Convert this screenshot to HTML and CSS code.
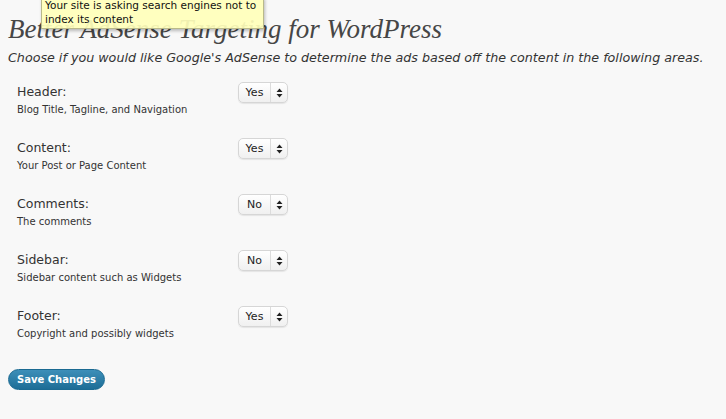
FILE: index.html
```html
<!DOCTYPE html>
<html>
<head>
<meta charset="utf-8">
<link rel="stylesheet" href="styles.css">
</head>
<body>
<div class="wrap">
  <h2 class="title">Better AdSense Targeting for WordPress</h2>
  <p class="intro">Choose if you would like Google's AdSense to determine the ads based off the content in the following areas.</p>
  <div class="rows">
    <div class="row">
      <div class="label"><div class="name">Header:</div><div class="desc">Blog Title, Tagline, and Navigation</div></div>
      <div class="select"><span class="val">Yes</span><span class="arrows"><svg width="7" height="10" viewBox="0 0 7 10"><path d="M3.5 0.5 L6.5 4 L0.5 4 Z M3.5 9.5 L6.5 6 L0.5 6 Z" fill="#222"/></svg></span></div>
    </div>
    <div class="row">
      <div class="label"><div class="name">Content:</div><div class="desc">Your Post or Page Content</div></div>
      <div class="select"><span class="val">Yes</span><span class="arrows"><svg width="7" height="10" viewBox="0 0 7 10"><path d="M3.5 0.5 L6.5 4 L0.5 4 Z M3.5 9.5 L6.5 6 L0.5 6 Z" fill="#222"/></svg></span></div>
    </div>
    <div class="row">
      <div class="label"><div class="name">Comments:</div><div class="desc">The comments</div></div>
      <div class="select"><span class="val">No</span><span class="arrows"><svg width="7" height="10" viewBox="0 0 7 10"><path d="M3.5 0.5 L6.5 4 L0.5 4 Z M3.5 9.5 L6.5 6 L0.5 6 Z" fill="#222"/></svg></span></div>
    </div>
    <div class="row">
      <div class="label"><div class="name">Sidebar:</div><div class="desc">Sidebar content such as Widgets</div></div>
      <div class="select"><span class="val">No</span><span class="arrows"><svg width="7" height="10" viewBox="0 0 7 10"><path d="M3.5 0.5 L6.5 4 L0.5 4 Z M3.5 9.5 L6.5 6 L0.5 6 Z" fill="#222"/></svg></span></div>
    </div>
    <div class="row">
      <div class="label"><div class="name">Footer:</div><div class="desc">Copyright and possibly widgets</div></div>
      <div class="select"><span class="val">Yes</span><span class="arrows"><svg width="7" height="10" viewBox="0 0 7 10"><path d="M3.5 0.5 L6.5 4 L0.5 4 Z M3.5 9.5 L6.5 6 L0.5 6 Z" fill="#222"/></svg></span></div>
    </div>
  </div>
  <button class="save">Save Changes</button>
</div>
<div class="tooltip">Your site is asking search engines not to<br>index its content</div>
</body>
</html>
```
FILE: styles.css
```css
html, body {
  margin: 0;
  padding: 0;
  background: #f8f8f8;
}
body {
  font-family: "DejaVu Sans", sans-serif;
  color: #333;
  width: 726px;
  height: 419px;
  overflow: hidden;
  position: relative;
}
.wrap {
  padding: 12px 8px 0 8px;
}
.title {
  margin: 0;
  font-family: "Liberation Serif", serif;
  font-style: italic;
  font-weight: normal;
  font-size: 27px;
  line-height: 34px;
  color: #464646;
}
.intro {
  margin: 3px 0 0 0;
  font-style: italic;
  font-size: 12.7px;
  line-height: 18px;
  color: #333;
}
.rows {
  margin-top: 16px;
  padding-left: 9px;
}
.row {
  display: grid;
  grid-template-columns: 221px auto;
  align-items: start;
  height: 56px;
}
.name {
  margin-top: 1px;
  font-size: 12.5px;
  line-height: 16px;
  color: #333;
}
.desc {
  font-size: 10px;
  line-height: 14px;
  margin-top: 3px;
  color: #333;
}
.select {
  display: flex;
  align-items: stretch;
  width: 48px;
  height: 19px;
  margin-top: -1px;
  border: 1px solid #d6d6d6;
  border-radius: 5px;
  background: linear-gradient(#ffffff, #f0f0f0);
  box-shadow: 0 1px 1px rgba(0,0,0,0.08);
  font-size: 11px;
  color: #222;
}
.val {
  width: 31px;
  display: flex;
  align-items: center;
  justify-content: center;
  border-right: 1px solid #dcdcdc;
}
.arrows {
  flex: 1;
  display: flex;
  align-items: center;
  justify-content: center;
}
.save {
  margin-top: 6px;
  font-family: "DejaVu Sans", sans-serif;
  font-weight: bold;
  font-size: 10px;
  color: #fff;
  background: linear-gradient(#3d8fb9, #1d6d96);
  border: 1px solid #1b6a92;
  border-radius: 11px;
  width: 97px;
  height: 21px;
  padding: 0;
}
.tooltip {
  position: absolute;
  left: 41px;
  top: -3px;
  width: 215px;
  padding: 0 3px 2px 3px;
  background: rgba(255, 255, 186, 0.92);
  border: 1px solid #b9b98a;
  box-shadow: 1px 2px 3px rgba(0,0,0,0.25);
  font-size: 10.5px;
  line-height: 14px;
  color: #111;
}
```
